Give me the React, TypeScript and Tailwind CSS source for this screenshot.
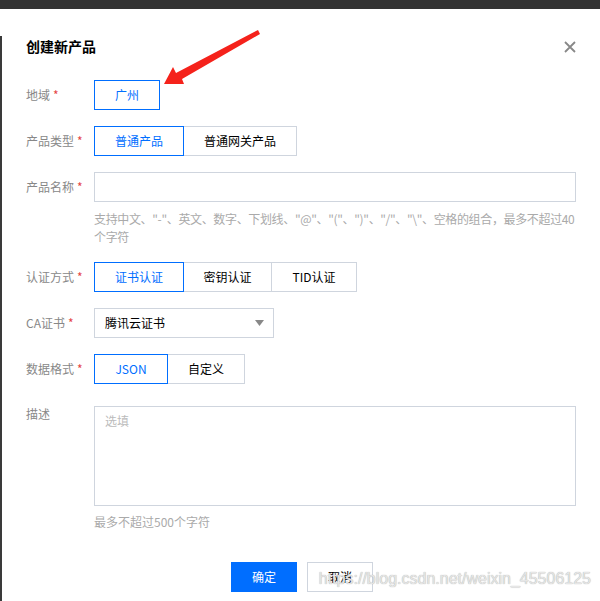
import type { ReactNode } from "react";

const CN = "font-['Noto_Sans_CJK_SC','Noto_Sans',sans-serif]";

function Label({ text, required = true, tall = false }: { text: string; required?: boolean; tall?: boolean }) {
  return (
    <div className={`w-[68px] shrink-0 text-xs text-[#888] ${tall ? "leading-[16px]" : "leading-[30px]"}`}>
      {text}
      {required && <span className="ml-[3px] text-[#e54545]">*</span>}
    </div>
  );
}

function Row({ children, className = "" }: { children: ReactNode; className?: string }) {
  return <div className={`flex items-start ${className}`}>{children}</div>;
}

type Opt = { label: string; w: string };

function Segmented({ options, active = 0 }: { options: Opt[]; active?: number }) {
  return (
    <div className="flex">
      {options.map((o, i) => (
        <div
          key={o.label}
          className={`relative flex h-[30px] items-center justify-center border text-xs ${o.w} ${
            i > 0 ? "-ml-px" : ""
          } ${i === active ? "z-10 border-[#006eff] text-[#006eff]" : "border-[#cfd5de] text-black"}`}
        >
          {o.label}
        </div>
      ))}
    </div>
  );
}

export default function App() {
  return (
    <div className={`relative h-[601px] w-[600px] overflow-hidden bg-white ${CN}`}>
      <div className="h-[9px] bg-[#333]" />
      <div className="h-[592px] border-l-2 border-[#3a3a3a] pl-[24px] pr-[24px]">
        <div className="mt-[27px] flex items-center justify-between">
          <h1 className="text-sm leading-[20px] font-bold text-black">创建新产品</h1>
          <svg width="12" height="12" viewBox="0 0 12 12" className="mt-[1px]">
            <path d="M1 1L11 11M11 1L1 11" stroke="#888" strokeWidth="1.8" />
          </svg>
        </div>

        <Row className="mt-[24px]">
          <Label text="地域" />
          <Segmented options={[{ label: "广州", w: "w-[66px]" }]} />
        </Row>

        <Row className="mt-[16px]">
          <Label text="产品类型" />
          <Segmented
            options={[
              { label: "普通产品", w: "w-[90px]" },
              { label: "普通网关产品", w: "w-[114px]" },
            ]}
          />
        </Row>

        <Row className="mt-[16px]">
          <Label text="产品名称" />
          <div className="flex-1">
            <div className="h-[30px] border border-[#cfd5de]" />
            <p className="mt-[8px] whitespace-nowrap text-xs leading-[18px] tracking-[-0.35px] text-[#aaa]">
              支持中文、"-"、英文、数字、下划线、"@"、"("、")"、"/"、"\"、空格的组合，最多不超过40
              <br />
              个字符
            </p>
          </div>
        </Row>

        <Row className="mt-[16px]">
          <Label text="认证方式" />
          <Segmented
            options={[
              { label: "证书认证", w: "w-[90px]" },
              { label: "密钥认证", w: "w-[89px]" },
              { label: "TID认证", w: "w-[86px]" },
            ]}
          />
        </Row>

        <Row className="mt-[16px]">
          <Label text="CA证书" />
          <div className="flex h-[30px] w-[180px] items-center justify-between border border-[#cfd5de] pl-[10px] pr-[9px] text-xs text-black">
            <span>腾讯云证书</span>
            <svg width="9" height="6" viewBox="0 0 9 6">
              <path d="M0 0H9L4.5 6Z" fill="#888" />
            </svg>
          </div>
        </Row>

        <Row className="mt-[16px]">
          <Label text="数据格式" />
          <Segmented
            options={[
              { label: "JSON", w: "w-[74px]" },
              { label: "自定义", w: "w-[78px]" },
            ]}
          />
        </Row>

        <Row className="mt-[22px]">
          <Label text="描述" required={false} tall />
          <div className="flex-1">
            <div className="h-[100px] border border-[#cfd5de] px-[10px] py-[5px] text-xs leading-[18px] text-[#bbb]">
              选填
            </div>
            <p className="mt-[7px] text-xs leading-[18px] text-[#aaa]">最多不超过500个字符</p>
          </div>
        </Row>

        <div className="mt-[31px] flex justify-center gap-[10px] pl-[2px]">
          <div className="flex h-[30px] w-[66px] items-center justify-center bg-[#006eff] text-xs text-white">
            确定
          </div>
          <div className="flex h-[30px] w-[66px] items-center justify-center border border-[#cfd5de] text-xs text-black">
            取消
          </div>
        </div>
      </div>

      <svg className="absolute left-0 top-0" width="600" height="120" viewBox="0 0 600 120">
        <polygon points="258,30 260,34 182,79 184,84 164,84 173,67 176,73" fill="#f5221b" />
      </svg>

      <div className="absolute bottom-[12px] right-[9px] font-['Liberation_Sans',Arial,sans-serif] text-base leading-[20px] text-[#e6e6e6] [text-shadow:0_0_1px_#9a9a9a]">
        https://blog.csdn.net/weixin_45506125
      </div>
    </div>
  );
}
